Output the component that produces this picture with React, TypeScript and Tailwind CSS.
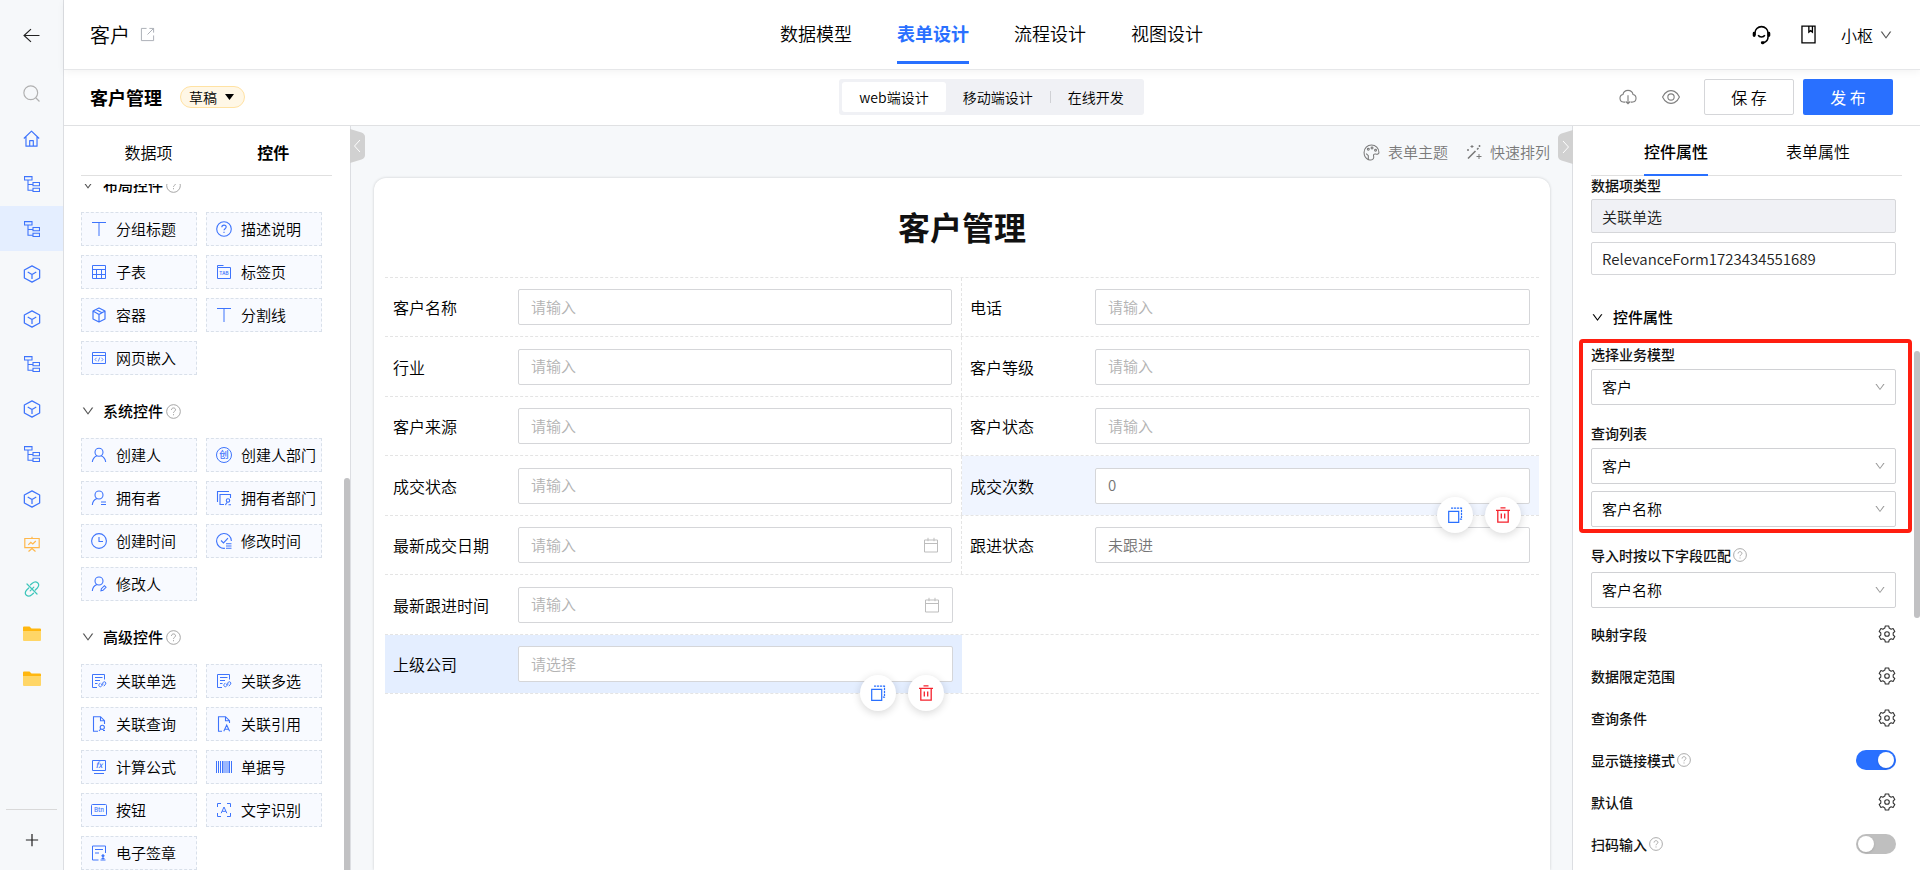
import type { ReactNode } from "react";
import { AiOutlineDown } from "react-icons/ai";

type IconProps = { size?: number; className?: string; children?: ReactNode; sw?: number };

function Svg({ size = 16, className = "", children, sw = 1 }: IconProps) {
  return (
    <svg
      width={size}
      height={size}
      viewBox="0 0 16 16"
      fill="none"
      stroke="currentColor"
      strokeWidth={sw}
      className={"shrink-0 " + className}
      aria-hidden="true"
    >
      {children}
    </svg>
  );
}

const glyphFont = "Noto Sans CJK SC, Noto Sans, sans-serif";

const TreeIcon = () => (
  <Svg size={16} sw={1.1}>
    <path d="M.5.6h7.500v3.400H.5zM4 4v10.200h4.500M4 8.500h4.500M9 6.500h6.500v3.200H9zM9 12.300h6.500v3.200H9z" />
  </Svg>
);
const HomeIcon = () => (
  <Svg size={17} sw={1.1}>
    <path strokeLinejoin="round" d="M.8 8L8 1l7.200 7M2.800 6.500v8.700h10.400V6.500M6.300 15V10h3.400v5" />
  </Svg>
);
const SearchIcon = () => (
  <Svg size={17} sw={1.1}>
    <circle cx="7.300" cy="7.300" r="6.500" />
    <path d="M12 12l3.500 3.500" />
  </Svg>
);
const BoardIcon = () => (
  <Svg size={16} sw={1.2}>
    <path d="M.8 2.500h14.400v9.200H.8zM8 .8v1.700M8 11.700v1.500M4.500 15.500L8 12.500l3.500 3M4.300 8.800l2.500-2.500 2 1.700 3-3" />
  </Svg>
);
const CubeIcon = ({ size = 18 }: { size?: number }) => (
  <Svg size={size} sw={1.1}>
    <path strokeLinejoin="round" d="M8 .8l6.800 3.600v7.200L8 15.200l-6.800-3.600V4.400zM4.200 6.200L8 8.400l3.800-2.200M8 8.400v4" />
  </Svg>
);
const BoxIcon = () => (
  <Svg sw={1.2}>
    <path strokeLinejoin="round" d="M8 1l6 3v8l-6 3-6-3V4zM2 4l6 3.500L14 4M8 7.500V15M5 2.500l6 3.200" />
  </Svg>
);
const BackIcon = () => (
  <Svg size={17} sw={1.1}>
    <path d="M15.500 8H1M7.500 2L1 8l6.500 6" />
  </Svg>
);
const PlusIcon = () => (
  <Svg size={14} sw={1.4}>
    <path d="M8 1v14M1 8h14" />
  </Svg>
);
const LinkIcon = () => (
  <Svg size={16} sw={1.2}>
    <path
      strokeLinecap="round"
      d="M6.500 3.800l1.800-1.600c2-1.700 4-1.600 5.300-.4s1.400 3.300-.3 5.200l-2 2M9.500 12.200l-1.800 1.600c-2 1.700-4 1.600-5.300.4S1 10.900 2.700 9l2-2M3 3l10 10M9.800 6.200l-3.600 3.600"
    />
  </Svg>
);
const FolderIcon = () => (
  <svg width="18" height="16" viewBox="0 0 18 16" aria-hidden="true">
    <path d="M0 1.500A1 1 0 0 1 1 .5h5.500L8.500 2.500H17a1 1 0 0 1 1 1V8H0z" fill="#ffb70f" />
    <path d="M0 5h18v9a1 1 0 0 1-1 1H1a1 1 0 0 1-1-1z" fill="#ffd666" />
  </svg>
);
const HelpIcon = ({ size = 14 }: { size?: number }) => (
  <Svg size={size} className="text-[#a0a0a0]">
    <circle cx="8" cy="8" r="7.300" />
    <path d="M5.800 6.400c0-1.400 1-2.200 2.200-2.200s2.200.8 2.200 2c0 1.500-2.200 1.600-2.200 3.200M8 10.800v1.200" />
  </Svg>
);
const GearIcon = () => (
  <svg width="18" height="18" viewBox="0 0 18 18" fill="none" stroke="currentColor" strokeWidth="1.100" strokeLinejoin="round" aria-hidden="true">
    <path d="M7.300 1h3.400l.5 2.100 1.900 1.100 2-.7 1.700 3-1.600 1.400v2.200l1.600 1.400-1.700 3-2-.7-1.900 1.100-.5 2.100H7.300l-.5-2.100-1.900-1.100-2 .7-1.700-3 1.600-1.400V7.900L1.200 6.500l1.700-3 2 .7 1.900-1.100z" />
    <circle cx="9" cy="9" r="2.300" />
  </svg>
);

const TIcon = () => (
  <Svg>
    <path d="M1 1.500h14M8 1.500V15" />
  </Svg>
);
const DescIcon = () => (
  <Svg sw={1.1}>
    <circle cx="8" cy="8" r="7.300" />
    <path d="M5.800 6.300c0-1.400 1-2.200 2.200-2.200s2.200.8 2.200 2c0 1.500-2.200 1.700-2.200 3.200M8 10.800V12" />
  </Svg>
);
const TableIcon = () => (
  <Svg>
    <path d="M1.500 1.500h13v13h-13zM1.500 5.500h13M1.500 10.500h13M5.500 5.500v9M10.500 5.500v9" />
  </Svg>
);
const TabIcon = () => (
  <Svg>
    <path d="M1.500 3.500h13v11h-13zM1.500 3.500v-2h6" />
    <text x="8" y="11" textAnchor="middle" fontSize="5" fontWeight="500" fill="currentColor" stroke="none" fontFamily={glyphFont}>TAB</text>
  </Svg>
);
const WebIcon = () => (
  <Svg>
    <path d="M1.500 2.500h13v11h-13zM1.500 5.500h13" />
    <path strokeWidth=".8" d="M5.500 7.800L4 9.500l1.500 1.700M10.500 7.800l1.500 1.700-1.500 1.700M8.700 7.500l-1.400 4" />
  </Svg>
);
const UserIcon = () => (
  <Svg sw={1.1}>
    <circle cx="8" cy="5.200" r="4" />
    <path d="M1.300 15c.5-3.300 2.500-5.500 4.700-6.300M14.700 15c-.5-3.300-2.500-5.500-4.700-6.300" />
  </Svg>
);
const DeptIcon = () => (
  <Svg>
    <circle cx="8" cy="8" r="7.500" />
    <text x="8" y="11.400" textAnchor="middle" fontSize="9.500" fontWeight="500" fill="currentColor" stroke="none" fontFamily={glyphFont}>创</text>
  </Svg>
);
const OwnerIcon = () => (
  <Svg sw={1.1}>
    <circle cx="8" cy="5" r="4" />
    <path d="M1.300 15c.3-3.500 2-5.500 4.700-6.500M10 12h5M10 14.500h5" />
  </Svg>
);
const OwnerDeptIcon = () => (
  <Svg sw={1.1}>
    <path d="M1.500 12V1.500H13M8 14.500H4V4.500h10.500V8" />
    <circle cx="12" cy="10.500" r="1.700" />
    <path d="M9.500 15.200c.2-1.300.8-2 1.800-2.900M12.500 14.800h2.500" />
  </Svg>
);
const ClockIcon = () => (
  <Svg sw={1.1}>
    <circle cx="8" cy="8" r="7.400" />
    <path d="M8 4v4.500h4" />
  </Svg>
);
const ModTimeIcon = () => (
  <Svg sw={1.1}>
    <path d="M9 15.300A7.400 7.400 0 1 1 15.400 8M5 7.500l2.500 2.500L12 5.200M10 10.800h5.500M10 13h5.500M10 15.200h5.500" />
  </Svg>
);
const ModUserIcon = () => (
  <Svg sw={1.1}>
    <circle cx="8" cy="5" r="4" />
    <path d="M1.300 15c.3-3.500 2-5.500 4.700-6.500M10 14.700l.4-2 3-3 1.600 1.600-3 3z" />
  </Svg>
);
const RelateIcon = () => (
  <Svg>
    <path d="M6 14.500H1.500v-13h12v5M4 4.500h7.500M4 7.500h5M4 10.500h2.500" />
    <path strokeLinecap="round" d="M10.500 11.500l1.800-2.300a1.500 1.500 0 0 1 2.300 1.900l-1.500 1.800M12.200 11l-1.800 2.300a1.500 1.500 0 0 1-2.300-1.900l1-1.200" />
  </Svg>
);
const QueryIcon = () => (
  <Svg sw={1.1}>
    <path d="M7 15.300H2.500V.7h7l4 4V8M9.500.7v4h4" />
    <circle cx="11.300" cy="11.300" r="2.100" />
    <path d="M9.700 13L8 15M12 14.500h2" />
  </Svg>
);
const RefIcon = () => (
  <Svg sw={1.1}>
    <path d="M6 15.300H2.500V.7h7l4 4V7M9.500.7v4h4M7.800 15.300l2.900-6.300 2.900 6.300M8.800 13.300h3.800" />
  </Svg>
);
const FormulaIcon = () => (
  <Svg>
    <path d="M1.500 1.500h13v10h-13zM3 14.500h10" />
    <text x="8" y="9.400" textAnchor="middle" fontSize="8" fontStyle="italic" fontWeight="500" fill="currentColor" stroke="none" fontFamily={glyphFont}>fx</text>
  </Svg>
);
const BarcodeIcon = () => (
  <Svg>
    <path d="M.5 2v12M2.500 2v12M4.500 2v12M6.500 2v12M8 2v12M10 2v12M12 2v12M13.500 2v12M15.500 2v12" />
  </Svg>
);
const BtnIcon = () => (
  <Svg>
    <rect x=".5" y="2.500" width="15" height="11" rx="1" />
    <text x="8" y="10.200" textAnchor="middle" fontSize="6" fontWeight="500" fill="currentColor" stroke="none" fontFamily={glyphFont}>Btn</text>
  </Svg>
);
const OcrIcon = () => (
  <Svg>
    <path d="M1.500 5V1.500H5M11 1.500h3.500V5M14.500 11v3.500H11M5 14.500H1.500V11M5.200 11.200L8 5l2.800 6.200M6.200 9.300h3.600" />
  </Svg>
);
const SealIcon = () => (
  <Svg>
    <path d="M7.500 15H1.500V1h13v7M4 4.500h8M4 8h4M9.500 15h5M12 14.500v-3M10.500 13.500h3" />
    <circle cx="12" cy="10.800" r="1.100" fill="currentColor" />
  </Svg>
);
const CopyIcon = () => (
  <Svg sw={1.2}>
    <path d="M1.700 4.300h10v11h-10z" />
    <path strokeDasharray="2.200 .8" d="M4 1.200h10.500v11h-2" />
  </Svg>
);
const TrashIcon = () => (
  <Svg sw={1.3}>
    <path d="M1 3.300h14M5.500.8h5M2.800 3.300v11.900h10.400V3.300M6.300 6.500v5M9.700 6.500v5" />
  </Svg>
);
const CalendarIcon = () => (
  <Svg className="text-[#bdbdbd]">
    <path d="M1.500 3h13v12h-13zM1.500 6.500h13M5 .8v3.400M11 .8v3.400" />
  </Svg>
);

function Down({ size = 12, className = "" }: { size?: number; className?: string }) {
  return <AiOutlineDown size={size} className={"shrink-0 " + className} aria-hidden="true" />;
}

const railItems: { label: string; icon: ReactNode; color: string; active?: boolean }[] = [
  { label: "首页", icon: <HomeIcon />, color: "text-[#3e74fc]" },
  { label: "模型一", icon: <TreeIcon />, color: "text-[#3e74fc]" },
  { label: "模型二", icon: <TreeIcon />, color: "text-[#3e74fc]", active: true },
  { label: "应用一", icon: <CubeIcon />, color: "text-[#3e74fc]" },
  { label: "应用二", icon: <CubeIcon />, color: "text-[#3e74fc]" },
  { label: "模型三", icon: <TreeIcon />, color: "text-[#3e74fc]" },
  { label: "应用三", icon: <CubeIcon />, color: "text-[#3e74fc]" },
  { label: "模型四", icon: <TreeIcon />, color: "text-[#3e74fc]" },
  { label: "应用四", icon: <CubeIcon />, color: "text-[#3e74fc]" },
  { label: "看板", icon: <BoardIcon />, color: "text-[#ffb74a]" },
  { label: "链接", icon: <LinkIcon />, color: "text-[#3ec6bb]" },
  { label: "文件夹一", icon: <FolderIcon />, color: "" },
  { label: "文件夹二", icon: <FolderIcon />, color: "" },
];

function Rail() {
  return (
    <aside className="flex w-16 shrink-0 flex-col border-r border-[#dcdee2] bg-[#f6f8fa]">
      <button aria-label="返回" className="flex h-[70px] items-center justify-center text-[#222]">
        <BackIcon />
      </button>
      <button aria-label="搜索" className="flex h-[46px] items-center justify-center text-[#b0b0b0]">
        <SearchIcon />
      </button>
      <nav className="flex flex-col">
        {railItems.map((it) => (
          <a
            key={it.label}
            href="#"
            aria-label={it.label}
            className={"flex h-[45px] items-center justify-center " + it.color + (it.active ? " bg-[#e4eeff]" : "")}
          >
            {it.icon}
          </a>
        ))}
      </nav>
      <div className="mx-1.5 mt-auto flex h-[61px] items-center justify-center border-t border-[#d9d9d9]">
        <button aria-label="新增" className="text-[#222]">
          <PlusIcon />
        </button>
      </div>
    </aside>
  );
}

function Header() {
  const tabs = ["数据模型", "表单设计", "流程设计", "视图设计"];
  return (
    <header className="relative z-10 grid h-[70px] shrink-0 grid-cols-[1fr_auto_1fr] items-stretch border-b border-[#e6e7e9] bg-white pr-[27px] pl-[26px] shadow-[0_2px_8px_rgba(0,0,0,0.05)]">
      <div className="flex items-center gap-2.5">
        <span className="text-[20px] text-black">客户</span>
        <a href="#" aria-label="打开" className="text-[#a8acb3]">
          <Svg size={15}>
            <path d="M7 1.500H1.500v13h13V9M10 1.500h4.500V6M14.500 1.500L8 8" />
          </Svg>
        </a>
      </div>
      <nav className="flex gap-[45px] text-[18px]">
        {tabs.map((t) => (
          <a
            key={t}
            href="#"
            className={
              "mb-[5px] flex items-center border-b-[3px] pt-1.5 " +
              (t === "表单设计" ? "border-[#2970ff] font-bold text-[#2970ff]" : "border-transparent text-black")
            }
          >
            {t}
          </a>
        ))}
      </nav>
      <div className="flex items-center justify-end text-black">
        <button aria-label="客服">
          <Svg size={21} sw={1.2}>
            <path d="M3 8.500V7a5 5 0 0 1 10 0v2.500c0 2.500-1.200 4.200-3.500 4.700M5.500 8.500c.8 1.800 4.200 1.800 5 0" />
            <path strokeWidth="2.200" strokeLinecap="round" d="M2.400 7v1.800M13.600 7v1.800M8.600 14.300h.6" />
          </Svg>
        </button>
        <button aria-label="手册" className="ml-[27px]">
          <Svg size={19} sw={1.1}>
            <path d="M2.500 1h11v14h-11zM8.300 1v5l1.500-1.200L11.300 6V1" />
          </Svg>
        </button>
        <button className="ml-[23px] flex items-center gap-1.5 text-[16px]">
          小枢
          <Down size={14} className="text-[#555]" />
        </button>
      </div>
    </header>
  );
}

function SubHeader() {
  return (
    <div className="grid h-14 shrink-0 grid-cols-[1fr_auto_1fr] items-center border-b border-[#e0e1e3] bg-white pr-[27px] pb-px pl-[26px]">
      <div className="flex items-center gap-[18px]">
        <h1 className="text-[18px] leading-6 font-bold text-black">客户管理</h1>
        <button className="flex h-[22px] items-center gap-2 rounded-full border border-[#ffe2a3] bg-[#fff7e6] pr-2.5 pl-2 text-[14px] text-black">
          草稿
          <svg width="9" height="6" viewBox="0 0 9 6" fill="currentColor" aria-hidden="true">
            <path d="M0 0h9L4.500 6z" />
          </svg>
        </button>
      </div>
      <div className="flex h-9 items-center rounded-[3px] bg-[#f0f1f5] p-[3px] text-[14px] text-black">
        <button className="h-full rounded-[3px] bg-white px-[17px]">web端设计</button>
        <button className="h-full px-[17px]">移动端设计</button>
        <span className="h-3 w-px bg-[#d0d1d5]" />
        <button className="h-full px-[17px]">在线开发</button>
      </div>
      <div className="flex items-center justify-end text-[16px]">
        <button aria-label="下载" className="text-[#808080]">
          <Svg size={18}>
            <path d="M5.500 12.500H4a3.400 3.400 0 0 1-.5-6.700 4.600 4.600 0 0 1 9 0 3.400 3.400 0 0 1-.5 6.700h-1.500M8 6.500V14M6 12l2 2 2-2" />
          </Svg>
        </button>
        <button aria-label="预览" className="ml-[25px] text-[#808080]">
          <Svg size={18}>
            <path d="M.5 8Q2 4.500 5 3Q8 1.700 11 3Q14 4.500 15.500 8Q14 11.500 11 13Q8 14.300 5 13Q2 11.500 .5 8z" />
            <circle cx="8" cy="8" r="2.800" />
          </Svg>
        </button>
        <button className="ml-6 h-9 w-[90px] rounded-[2px] border border-[#d5d6d9] bg-white text-black">保 存</button>
        <button className="ml-[9px] h-9 w-[90px] rounded-[2px] bg-[#2970ff] font-normal text-white">发 布</button>
      </div>
    </div>
  );
}

const groups: { title: string; items: [string, ReactNode][] }[] = [
  {
    title: "布局控件",
    items: [
      ["分组标题", <TIcon />],
      ["描述说明", <DescIcon />],
      ["子表", <TableIcon />],
      ["标签页", <TabIcon />],
      ["容器", <BoxIcon />],
      ["分割线", <TIcon />],
      ["网页嵌入", <WebIcon />],
    ],
  },
  {
    title: "系统控件",
    items: [
      ["创建人", <UserIcon />],
      ["创建人部门", <DeptIcon />],
      ["拥有者", <OwnerIcon />],
      ["拥有者部门", <OwnerDeptIcon />],
      ["创建时间", <ClockIcon />],
      ["修改时间", <ModTimeIcon />],
      ["修改人", <ModUserIcon />],
    ],
  },
  {
    title: "高级控件",
    items: [
      ["关联单选", <RelateIcon />],
      ["关联多选", <RelateIcon />],
      ["关联查询", <QueryIcon />],
      ["关联引用", <RefIcon />],
      ["计算公式", <FormulaIcon />],
      ["单据号", <BarcodeIcon />],
      ["按钮", <BtnIcon />],
      ["文字识别", <OcrIcon />],
      ["电子签章", <SealIcon />],
    ],
  },
];

function ControlsPanel() {
  return (
    <section className="relative flex w-[287px] shrink-0 flex-col border-r border-[#dcdee2] bg-white">
      <div className="mr-[18px] ml-[17px] grid h-[50px] shrink-0 grid-cols-2 items-center border-b border-[#e0e0e0] pt-0.5 text-[16px] text-black">
        <button className="pr-[34px] text-right">数据项</button>
        <button className="pl-2 font-bold">控件</button>
      </div>
      <div className="mt-2 flex-1 overflow-hidden">
        <div className="-mt-2.5 flex flex-col gap-[25px] pr-7 pl-[17px]">
          {groups.map((g) => (
            <div key={g.title}>
              <div className="flex h-[22px] items-center">
                <Down size={14} className="text-[#555]" />
                <h2 className="ml-2 text-[15px] font-medium text-black">{g.title}</h2>
                <span className="ml-[3px]">
                  <HelpIcon size={15} />
                </span>
              </div>
              <ul className="mt-4 grid grid-cols-2 gap-[9px] text-[15px] text-black">
                {g.items.map(([name, icon]) => (
                  <li key={name} className="flex h-[34px] items-center gap-[9px] border border-dashed border-[#d9e0ea] bg-[#f8faff] pl-[9px] whitespace-nowrap">
                    <span className="text-[#3e74fc]">{icon}</span>
                    {name}
                  </li>
                ))}
              </ul>
            </div>
          ))}
        </div>
      </div>
      <div className="absolute right-0 bottom-0 h-[392px] w-1.5 rounded-t-full bg-[#c1c1c3]" />
      <button aria-label="收起左侧" className="absolute top-[3px] left-full z-10">
        <svg width="15" height="34" viewBox="0 0 15 34" aria-hidden="true">
          <path d="M0 0l11.500 3.500Q15 5 15 8v18q0 3-3.500 4.500L0 34z" fill="#d1d1d1" />
          <path d="M10 11l-5.500 6 5.500 6" fill="none" stroke="#fff" />
        </svg>
      </button>
    </section>
  );
}

type Field = { label: string; placeholder?: string; value?: string; date?: boolean; tone?: string; actions?: boolean };
const rows: [Field, Field | null][] = [
  [{ label: "客户名称" }, { label: "电话" }],
  [{ label: "行业" }, { label: "客户等级" }],
  [{ label: "客户来源" }, { label: "客户状态" }],
  [{ label: "成交状态" }, { label: "成交次数", value: "0", tone: "bg-[#f0f5ff]", actions: true }],
  [{ label: "最新成交日期", date: true }, { label: "跟进状态", value: "未跟进" }],
  [{ label: "最新跟进时间", date: true }, null],
  [{ label: "上级公司", placeholder: "请选择", tone: "bg-[#e4eeff]", actions: true }, null],
];

const roundButton = "flex size-9 items-center justify-center rounded-full bg-white shadow-[0_2px_8px_rgba(0,0,0,0.16)]";

function FieldCell({ field, divided }: { field: Field; divided: boolean }) {
  const id = "field-" + field.label;
  return (
    <div className={"relative flex min-w-0 items-center pr-[9px] pl-2 " + (field.tone ?? "") + (divided ? " border-r border-dashed border-[#e4e4e4]" : "")}>
      <label htmlFor={id} className="w-[125px] shrink-0 text-[16px] text-black">
        {field.label}
      </label>
      <div className="flex h-9 min-w-0 flex-1 items-center rounded-[2px] border border-[#d5d6d9] bg-white px-3">
        <input
          id={id}
          placeholder={field.placeholder ?? "请输入"}
          defaultValue={field.value}
          className="w-full min-w-0 flex-1 bg-transparent text-[15px] text-[#757575] outline-none placeholder:text-[#b3b3b3]"
        />
        {field.date && <CalendarIcon />}
      </div>
      {field.actions && (
        <div className="absolute right-[18px] -bottom-[18px] z-10 flex gap-3">
          <button aria-label="复制" className={roundButton + " text-[#2970ff]"}>
            <CopyIcon />
          </button>
          <button aria-label="删除" className={roundButton + " text-[#f5222d]"}>
            <TrashIcon />
          </button>
        </div>
      )}
    </div>
  );
}

function Canvas() {
  return (
    <main className="flex min-w-0 flex-1 flex-col bg-[#f6f8fa]">
      <div className="flex h-[52px] shrink-0 items-center justify-end gap-[18px] pr-[22px] text-[15px] text-[#7a7a7a]">
        <button className="flex items-center gap-2">
          <Svg size={17}>
            <path d="M5 14.800C2.500 13.500 1 11 1 8a7 7 0 1 1 14 0c0 1.500-1.500 2-3 1.500-1.500-.4-2.500.5-2 2 .5 1.600-.5 3.500-2.500 3.500-1 0-1.700-.2-2.500-.5V11L3 9" />
            <circle cx="5" cy="5" r=".9" />
            <circle cx="8.500" cy="3.800" r=".9" />
            <circle cx="11.800" cy="5.800" r=".9" />
          </Svg>
          表单主题
        </button>
        <button className="flex items-center gap-2">
          <Svg size={16}>
            <path strokeWidth="1.600" d="M2 14.500L9.500 7M11 5.500l1.500-1.500" />
            <path d="M6 1v3M4.500 2.500h3M13 10v5M10.500 12.500h5M13.500 1v2M12.500 2h2M2 5v2M1 6h2" />
          </Svg>
          快速排列
        </button>
      </div>
      <div className="mr-[22px] ml-[23px] flex-1 rounded-t-xl bg-white px-[11px] shadow-[0_0_3px_rgba(0,0,0,0.18)]">
        <h2 className="flex h-[99px] items-center justify-center pb-1 text-[32px] font-bold text-[#111]">客户管理</h2>
        <form className="border-b border-dashed border-[#e4e4e4]">
          {rows.map(([a, b], i) => (
            <div key={a.label} className="grid grid-cols-2 border-t border-dashed border-[#e4e4e4] odd:min-h-[59px] even:min-h-[60px]">
              <FieldCell field={a} divided={i < 5} />
              {b && <FieldCell field={b} divided={false} />}
            </div>
          ))}
        </form>
      </div>
    </main>
  );
}

function SelectBox({ id, label, value }: { id: string; label: string; value: string }) {
  return (
    <div className="relative">
      <select
        id={id}
        aria-label={label}
        className="block h-9 w-full appearance-none rounded-[2px] border border-[#d0d1d4] bg-white pr-8 pl-2.5 text-[15px] text-black outline-none"
      >
        <option>{value}</option>
      </select>
      <Down size={12} className="pointer-events-none absolute top-3 right-2.5 text-[#999]" />
    </div>
  );
}

const settings: { label: string; help?: boolean; kind: "gear" | "on" | "off" }[] = [
  { label: "映射字段", kind: "gear" },
  { label: "数据限定范围", kind: "gear" },
  { label: "查询条件", kind: "gear" },
  { label: "显示链接模式", help: true, kind: "on" },
  { label: "默认值", kind: "gear" },
  { label: "扫码输入", help: true, kind: "off" },
];

function PropertiesPanel() {
  const label = "block h-5 text-[14px] leading-5 font-medium text-[#111]";
  return (
    <section className="relative flex w-[348px] shrink-0 flex-col border-l border-[#dcdee2] bg-white">
      <button aria-label="收起右侧" className="absolute top-1 right-full z-10">
        <svg width="15" height="34" viewBox="0 0 15 34" aria-hidden="true">
          <path d="M15 0L3.500 3.500Q0 5 0 8v18q0 3 3.500 4.500L15 34z" fill="#d1d1d1" />
          <path d="M5 11l5.500 6L5 23" fill="none" stroke="#fff" />
        </svg>
      </button>
      <div className="mr-[18px] ml-[18px] flex h-[50px] shrink-0 justify-between border-b border-[#e0e0e0] pr-[52px] pl-[53px] text-[16px] text-black">
        <button className="-mb-px border-b-2 border-[#2970ff] pt-0.5 font-medium">控件属性</button>
        <button className="-mb-px border-b-2 border-transparent pt-0.5">表单属性</button>
      </div>
      <div className="flex-1 overflow-hidden">
        <div className="pr-6 pl-[18px]">
          <label htmlFor="itemType" className="block h-[18px] text-[14px] leading-[18px] font-medium text-[#111]">数据项类型</label>
          <input
            id="itemType"
            readOnly
            defaultValue="关联单选"
            className="mt-[5px] block h-[34px] w-full rounded-[2px] border border-[#d5d6d9] bg-[#f0f1f5] px-2.5 text-[15px] text-[#222] outline-none"
          />
          <input
            aria-label="编码"
            defaultValue="RelevanceForm1723434551689"
            className="mt-[9px] block h-[33px] w-full rounded-[2px] border border-[#d5d6d9] bg-white px-2.5 text-[15px] text-[#222] outline-none"
          />
          <h3 className="mt-[31px] flex h-[22px] items-center gap-[9px] text-[15px] font-medium text-black">
            <Down size={13} />
            控件属性
          </h3>
        </div>
        <div className="mt-[11px] mr-2 ml-1.5 rounded-[4px] border-4 border-[#ff1e10] pr-3 pb-0.5 pl-2">
          <label htmlFor="model" className={label + " mt-px"}>选择业务模型</label>
          <div className="mt-[5px]">
            <SelectBox id="model" label="选择业务模型" value="客户" />
          </div>
          <label htmlFor="list" className={label + " mt-[18px]"}>查询列表</label>
          <div className="mt-[5px] flex flex-col gap-[7px]">
            <SelectBox id="list" label="查询列表" value="客户" />
            <SelectBox id="listField" label="查询字段" value="客户名称" />
          </div>
        </div>
        <div className="mt-3 pr-6 pl-[18px]">
          <div className="flex items-center gap-0.5">
            <label htmlFor="match" className={label}>导入时按以下字段匹配</label>
            <HelpIcon />
          </div>
          <div className="mt-[7px]">
            <SelectBox id="match" label="导入时按以下字段匹配" value="客户名称" />
          </div>
          <ul className="mt-[5px]">
            {settings.map((s) => (
              <li key={s.label} className="flex h-[42px] items-center">
                <span className={label}>{s.label}</span>
                {s.help && (
                  <span className="ml-0.5">
                    <HelpIcon />
                  </span>
                )}
                {s.kind === "gear" ? (
                  <button aria-label={s.label + "设置"} className="ml-auto text-[#333]">
                    <GearIcon />
                  </button>
                ) : (
                  <input
                    type="checkbox"
                    role="switch"
                    aria-label={s.label}
                    defaultChecked={s.kind === "on"}
                    className="ml-auto h-5 w-10 appearance-none rounded-full bg-[#bfbfbf] p-0.5 before:block before:size-4 before:rounded-full before:bg-white before:shadow before:content-[''] checked:bg-[#2970ff] checked:before:ml-5"
                  />
                )}
              </li>
            ))}
          </ul>
        </div>
      </div>
      <div className="absolute top-[225px] right-0 h-[267px] w-1.5 rounded-full bg-[#c1c1c3]" />
    </section>
  );
}

export default function App() {
  return (
    <div className="flex h-screen overflow-hidden bg-white font-['Noto_Sans_CJK_SC','Noto_Sans',sans-serif] font-[350]">
      <Rail />
      <div className="flex min-w-0 flex-1 flex-col">
        <Header />
        <SubHeader />
        <div className="flex min-h-0 flex-1">
          <ControlsPanel />
          <Canvas />
          <PropertiesPanel />
        </div>
      </div>
    </div>
  );
}
